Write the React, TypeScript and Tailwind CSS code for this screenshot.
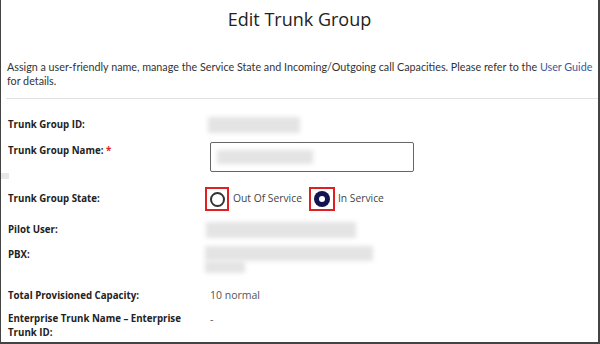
import React from "react";

const Blur = ({ w, h, className = "" }: { w: number; h: number; className?: string }) => (
  <div className={"bg-[#e4e4e4] blur-[2px] " + className} style={{ width: w, height: h }} />
);

export default function App() {
  const label = "text-[9.7px] font-bold text-[#222] leading-[14px]";
  return (
    <div className="w-[600px] h-[344px] bg-white border-l border-r-2 border-b-2 border-[#444] relative overflow-hidden" style={{ fontFamily: "'Open Sans', 'Noto Sans', sans-serif" }}>
      <div className="absolute left-0 top-[173px] w-[8px] h-[6px] bg-[#e8e8e8]" />
      <div className="h-[36px] flex items-center justify-center text-[18px] text-[#222] pt-[2px]">Edit Trunk Group</div>
      <div className="mt-[24px] pl-[6px] text-[10.75px] leading-[14px] text-[#333]" style={{ fontFamily: "'Lato', sans-serif" }}>
        Assign a user-friendly name, manage the Service State and Incoming/Outgoing call Capacities. Please refer to the <span className="text-[#3a5a9c] whitespace-nowrap">User Guide</span> for details.
      </div>
      <div className="mt-[10px] ml-[5px] h-px bg-[#e2e2e2]" />
      <div className="pl-[7px]">
        <div className="mt-[17px] h-[18px] flex items-center">
          <div className={"w-[198px] " + label}>Trunk Group ID:</div>
          <Blur w={92} h={16} className="ml-[2px]" />
        </div>
        <div className="mt-[8px] flex">
          <div className={"w-[198px] pt-[2px] " + label}>Trunk Group Name: <span className="text-[#d22]">*</span></div>
          <div className="ml-[4px] w-[204px] h-[30px] border border-[#666] rounded-[2px] flex items-center pl-[6px]">
            <Blur w={96} h={14} />
          </div>
        </div>
        <div className="mt-[15px] h-[24px] flex items-center">
          <div className={"w-[197px] " + label}>Trunk Group State:</div>
          <div className="w-[24px] h-[24px] border-2 border-[#e02020] flex items-center justify-center">
            <div className="w-[15px] h-[15px] rounded-full border-2 border-[#333]" />
          </div>
          <span className="ml-[4px] text-[10.3px] text-[#444]">Out Of Service</span>
          <div className="ml-[7px] w-[26px] h-[24px] border-2 border-[#e02020] flex items-center justify-center">
            <div className="w-[16px] h-[16px] rounded-full bg-[#13134f] flex items-center justify-center">
              <div className="w-[6px] h-[6px] rounded-full bg-white" />
            </div>
          </div>
          <span className="ml-[3px] text-[10.3px] text-[#444]">In Service</span>
        </div>
        <div className="mt-[9px] h-[19px] flex items-center">
          <div className={"w-[198px] " + label}>Pilot User:</div>
          <Blur w={150} h={16} />
        </div>
        <div className="mt-[9px] flex">
          <div className={"w-[197px] " + label}>PBX:</div>
          <div className="flex flex-col -mt-[2px]">
            <Blur w={168} h={15} />
            <Blur w={40} h={12} />
          </div>
        </div>
        <div className="mt-[16px] h-[14px] flex items-center">
          <div className={"w-[202px] " + label}>Total Provisioned Capacity:</div>
          <span className="text-[10.5px] text-[#555]">10 normal</span>
        </div>
        <div className="mt-[9px] flex">
          <div className={"w-[202px] " + label}>Enterprise Trunk Name – Enterprise<br />Trunk ID:</div>
          <span className="text-[10.5px] leading-[14px] text-[#555]">-</span>
        </div>
      </div>
    </div>
  );
}
